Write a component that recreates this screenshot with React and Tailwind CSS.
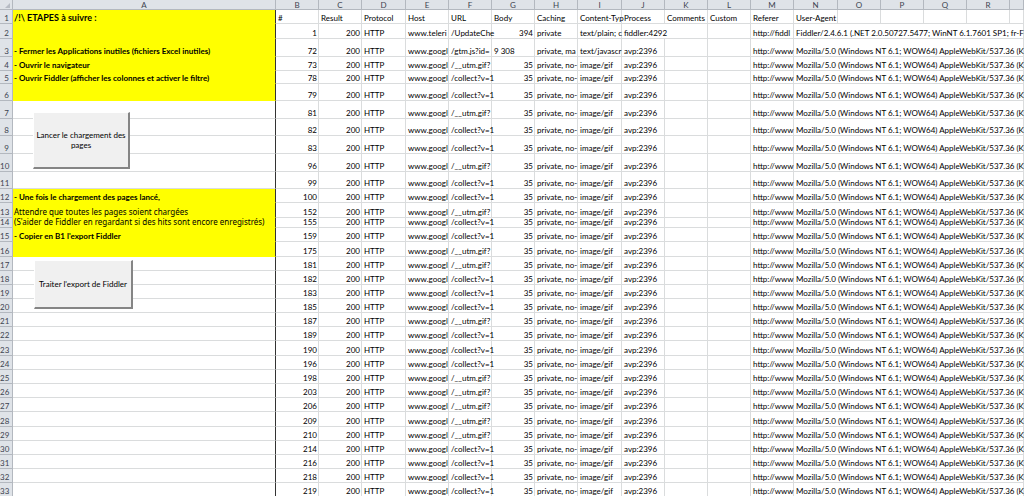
import React from "react";

const COLUMNS = [
  ["A", "w-[263px]"], ["B", "w-[43px]"], ["C", "w-[43px]"], ["D", "w-[44px]"],
  ["E", "w-[43px]"], ["F", "w-[43px]"], ["G", "w-[43px]"], ["H", "w-[43px]"],
  ["I", "w-[44px]"], ["J", "w-[43px]"], ["K", "w-[43px]"], ["L", "w-[43px]"],
  ["M", "w-[43px]"], ["N", "w-[44px]"], ["O", "w-[43px]"], ["P", "w-[43px]"],
  ["Q", "w-[43px]"], ["R", "w-[43px]"], ["", ""],
];

const H10 = "h-[10px]";
const H14 = "h-[14px]";
const H15 = "h-[15px]";
const H18 = "h-[18px]";
const H17 = "h-[17px]";

const AGENT = "Mozilla/5.0 (Windows NT 6.1; WOW64) AppleWebKit/537.36 (KH";
const UTM = "/__utm.gif?";
const COLLECT = "/collect?v=1";

const hit = (height, id, url, step) => ({
  height, id, url, step,
  host: "www.googl", body: "35", caching: "private, no-",
  type: "image/gif", process: "avp:2396", referer: "http://www", agent: AGENT,
});

const ROWS = [
  { ...hit(H15, 1, "/UpdateChe", { text: "" }), host: "www.teleri", body: "394", caching: "private",
    type: "text/plain; c", process: "fiddler:4292", wide: true, referer: "http://fiddl",
    agent: "Fiddler/2.4.6.1 (.NET 2.0.50727.5477; WinNT 6.1.7601 SP1; fr-FR; 8x" },
  { ...hit(H18, 72, "/gtm.js?id=", { text: "- Fermer les Applications inutiles (fichiers Excel inutiles)", bold: true }),
    body: "9 308", bodyText: true, caching: "private, ma", type: "text/javascr" },
  hit(H14, 73, UTM, { text: "- Ouvrir le navigateur", bold: true }),
  hit("h-[13px]", 78, COLLECT, { text: "- Ouvrir Fiddler (afficher les colonnes et activer le filtre)", bold: true }),
  hit(H17, 79, COLLECT, { text: "" }),
  hit(H18, 81, UTM, { button: "launch" }),
  hit(H17, 82, COLLECT),
  hit(H18, 83, COLLECT),
  hit(H18, 96, UTM),
  hit(H17, 99, COLLECT),
  hit(H14, 100, COLLECT, { text: "- Une fois le chargement des pages lancé,", bold: true }),
  hit(H15, 152, UTM, { text: "Attendre que toutes les pages soient chargées" }),
  hit(H10, 155, COLLECT, { text: "(S'aider de Fiddler en regardant si des hits sont encore enregistrés)" }),
  hit(H14, 159, COLLECT, { text: "- Copier en B1 l'export Fiddler", bold: true }),
  hit(H15, 175, UTM, { text: "" }),
  hit(H14, 181, UTM, { button: "process" }),
  hit(H14, 182, COLLECT),
  hit(H14, 183, COLLECT),
  hit(H14, 185, COLLECT),
  hit(H14, 187, UTM),
  hit(H14, 189, COLLECT),
  hit(H15, 190, COLLECT),
  hit(H14, 196, COLLECT),
  hit(H14, 198, UTM),
  hit(H14, 203, UTM),
  hit(H14, 206, UTM),
  hit(H15, 209, UTM),
  hit(H14, 210, UTM),
  hit(H14, 214, COLLECT),
  hit(H14, 216, COLLECT),
  hit(H14, 218, COLLECT),
  hit(H14, 219, COLLECT),
];

const TITLES = ["#", "Result", "Protocol", "Host", "URL", "Body", "Caching", "Content-Typ", "Process",
  "Comments", "Custom", "Referer", "User-Agent", "", "", "", "", ""];

function Cell({ children, right, span }) {
  return (
    <td
      colSpan={span}
      className={`whitespace-nowrap border-b border-r border-[#dadcdd] p-0 pb-px align-bottom ${right ? "pr-px text-right" : "pl-[2px]"}`}
    >
      {children}
    </td>
  );
}

function RowNumber({ children }) {
  return (
    <th scope="row" className="border-b border-r border-[#b3b8bf] bg-[#dfe3e8] p-0 pr-[3px] pb-px text-right align-bottom font-normal text-[#3d4450]">
      {children}
    </th>
  );
}

function SheetButton({ place, children }) {
  return (
    <button
      type="button"
      className={`absolute z-10 border-t border-l border-r-2 border-b-2 border-t-white border-l-white border-r-[#858585] border-b-[#858585] bg-[#f0f0f0] text-center leading-[10px] text-black ${place}`}
    >
      {children}
    </button>
  );
}

function StepCell({ step }) {
  const base = "border-r border-r-[#333333] border-b p-0 pl-px pb-px align-bottom whitespace-nowrap";
  if (step && step.button) {
    return (
      <td className={`relative border-b-[#dadcdd] ${base}`}>
        {step.button === "launch" ? (
          <SheetButton place="top-[11px] left-[20px] h-[57px] w-[97px] whitespace-normal">
            Lancer le chargement des pages
          </SheetButton>
        ) : (
          <SheetButton place="top-[3px] left-[21px] h-[49px] w-[99px]">Traiter l'export de Fiddler</SheetButton>
        )}
      </td>
    );
  }
  if (!step) return <td className={`border-b-[#dadcdd] ${base}`} />;
  return (
    <td className={`border-b-[#ffff00] bg-[#ffff00] ${step.bold ? "font-bold" : "font-['Noto_Sans','Open_Sans',sans-serif]"} ${base}`}>
      {step.text}
    </td>
  );
}

export default function App() {
  return (
    <main className="h-screen w-full overflow-hidden bg-white">
      <table className="w-full min-w-[1024px] table-fixed border-separate border-spacing-0 font-['Lato','Noto_Sans',sans-serif] text-[8px] leading-[8px] text-black">
        <colgroup>
          <col className="w-[13px]" />
          {COLUMNS.map(([name, width], i) => <col key={i} className={width} />)}
        </colgroup>
        <thead>
          <tr className={H10}>
            <td className="border-r border-b border-[#b3b8bf] bg-[#dfe3e8] p-0">
              <svg viewBox="0 0 12 9" className="block h-[9px] w-3" aria-hidden="true">
                <path d="M10 3v5H5z" fill="#b7bcc4" />
              </svg>
            </td>
            {COLUMNS.map(([name], i) => (
              <th key={i} scope="col" className="border-r border-b border-[#b3b8bf] bg-[#dfe3e8] p-0 text-center font-normal text-[#3d4450]">
                {name}
              </th>
            ))}
          </tr>
        </thead>
        <tbody>
          <tr className={H14}>
            <RowNumber>1</RowNumber>
            <td className="border-r border-b border-r-[#333333] border-b-[#ffff00] bg-[#ffff00] p-0 pl-px align-bottom text-[9px] leading-[11px] font-bold whitespace-nowrap">
              /!\ ETAPES à suivre :
            </td>
            {TITLES.map((title, i) => <Cell key={i}>{title}</Cell>)}
          </tr>
          {ROWS.map((row, i) => (
            <tr key={row.id} className={row.height}>
              <RowNumber>{i + 2}</RowNumber>
              <StepCell step={row.step} />
              <Cell right>{row.id}</Cell>
              <Cell right>200</Cell>
              <Cell>HTTP</Cell>
              <Cell>{row.host}</Cell>
              <Cell>{row.url}</Cell>
              <Cell right={!row.bodyText}>{row.body}</Cell>
              <Cell>{row.caching}</Cell>
              <Cell>{row.type}</Cell>
              <Cell span={row.wide ? 2 : 1}>{row.process}</Cell>
              {!row.wide && <Cell />}
              <Cell />
              <Cell>{row.referer}</Cell>
              <Cell span={6}>{row.agent}</Cell>
            </tr>
          ))}
        </tbody>
      </table>
    </main>
  );
}
